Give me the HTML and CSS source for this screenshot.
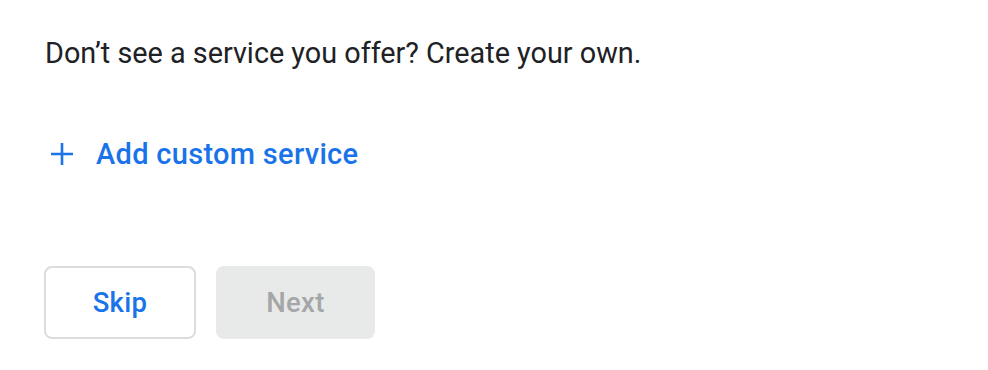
FILE: index.html
```html
<!DOCTYPE html>
<html lang="en">
<head>
  <meta charset="UTF-8">
  <title>Custom service</title>
  <link rel="stylesheet" href="styles.css">
</head>
<body>
  <div class="panel">
    <p class="hint">Don’t see a service you offer? Create your own.</p>
    <a class="add-link" href="#">
      <svg class="plus" width="24" height="24" viewBox="0 0 24 24">
        <path d="M12 1v22M1 12h22" stroke="#1a73e8" stroke-width="2.6" fill="none"/>
      </svg>
      <span>Add custom service</span>
    </a>
    <div class="actions">
      <button class="btn btn-skip">Skip</button>
      <button class="btn btn-next" disabled>Next</button>
    </div>
  </div>
</body>
</html>
```

FILE: styles.css
```css
* {
  margin: 0;
  padding: 0;
  box-sizing: border-box;
}

body {
  width: 988px;
  height: 370px;
  background: #fff;
  font-family: Roboto, Arial, sans-serif;
  overflow: hidden;
}

.panel {
  padding: 34px 0 0 44px;
  display: flex;
  flex-direction: column;
  align-items: flex-start;
}

.hint {
  font-size: 28.8px;
  line-height: 38px;
  color: #202124;
  padding-left: 1px;
}

.add-link {
  margin-top: 63px;
  display: flex;
  align-items: center;
  gap: 22px;
  padding-left: 6px;
  text-decoration: none;
  color: #1a73e8;
  font-size: 29px;
  font-weight: 500;
  letter-spacing: 0.3px;
  line-height: 38px;
}

.actions {
  margin-top: 93px;
  display: flex;
  gap: 20px;
}

.btn {
  height: 73px;
  border-radius: 8px;
  font-family: Roboto, Arial, sans-serif;
  font-size: 27.5px;
  font-weight: 500;
  letter-spacing: 0.3px;
}

.btn-skip {
  width: 152px;
  background: #fff;
  border: 2px solid #dadce0;
  color: #1a73e8;
}

.btn-next {
  width: 159px;
  background: #e8e9e9;
  border: none;
  color: #a4a6a7;
}
```
